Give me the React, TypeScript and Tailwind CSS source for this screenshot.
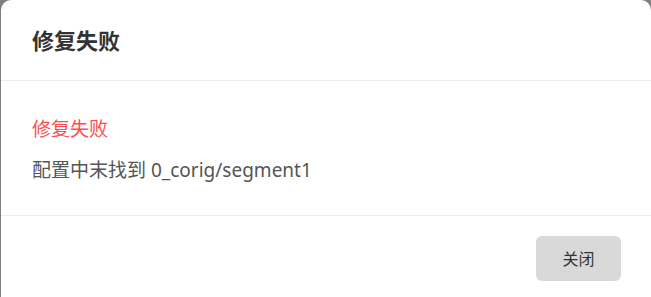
export default function App() {
  const font = { fontFamily: '"Noto Sans", "Noto Sans CJK SC", sans-serif' };
  return (
    <div className="w-[651px] h-[297px] bg-[#7f7f7f] flex overflow-hidden" style={font}>
      <div className="ml-[1px] flex-1 bg-white rounded-t-[10px] flex flex-col">
        <div className="h-[81px] flex items-center px-[31px] border-b border-[#ececec]">
          <h2 className="text-[22px] font-bold text-[#333] leading-none">修复失败</h2>
        </div>
        <div className="h-[135px] flex flex-col px-[31px] pt-[34px] gap-[13px] border-b border-[#ececec]">
          <p className="text-[19px] leading-[28px] text-[#ff4d4f]">修复失败</p>
          <p className="text-[19px] leading-[28px] text-[#555]">配置中末找到 0_corig/segment1</p>
        </div>
        <div className="flex justify-end pt-[20px] pr-[30px]">
          <button className="w-[85px] h-[45px] rounded-[6px] bg-[#d9d9d9] text-[16px] text-[#333]">关闭</button>
        </div>
      </div>
    </div>
  );
}
